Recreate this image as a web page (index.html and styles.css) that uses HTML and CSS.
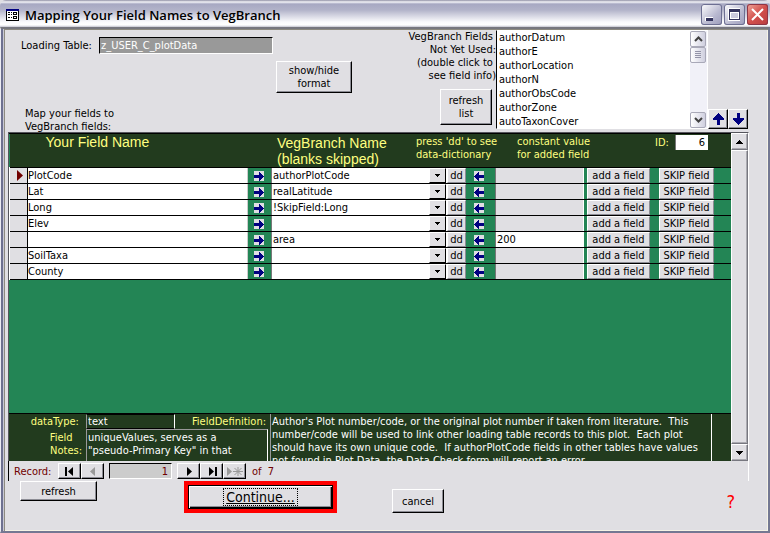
FILE: index.html
```html
<!DOCTYPE html>
<html lang="en">
<head>
<meta charset="utf-8">
<title>Mapping Your Field Names to VegBranch</title>
<link rel="stylesheet" href="styles.css">
</head>
<body>
<svg class="defs" width="0" height="0" aria-hidden="true">
  <symbol id="i-right" viewBox="0 0 10 10"><rect width="10" height="10" fill="#e0dfe3"/><path d="M0 4h5V1h1v1h1v1h1v1h1v1h1v1h-1v1h-1v1h-1v1h-1v1H5V7H0z" fill="#000080"/></symbol>
  <symbol id="i-left" viewBox="0 0 10 10"><rect width="10" height="10" fill="#e0dfe3"/><path d="M10 4H5V1H4v1H3v1H2v1H1v1H0v1h1v1h1v1h1v1h1v1h1V7h5z" fill="#000080"/></symbol>
  <symbol id="i-up" viewBox="0 0 11 12"><path d="M5 0h1v1h1v1h1v1h1v1h1v1h1v2H7v5H4V7H0V5h1V4h1V3h1V2h1V1h1z" fill="#000080"/></symbol>
  <symbol id="i-down" viewBox="0 0 11 12"><path d="M5 12h1v-1h1v-1h1V9h1V8h1V7h1V5H7V0H4v5H0v2h1v1h1v1h1v1h1v1h1z" fill="#000080"/></symbol>
  <symbol id="i-drop" viewBox="0 0 5 3"><path d="M0 0h5v1H4v1H3v1H2V2H1V1H0z"/></symbol>
</svg>
<div class="window">
  <header class="titlebar">
    <svg class="app-icon" width="13" height="12" viewBox="0 0 13 12" shape-rendering="crispEdges"><path d="M0 0h13v12H0z" fill="#000"/><path d="M0 0h13v2H0z" fill="#000080"/><path d="M1 2h11v9H1z" fill="#fff"/><path d="M2 3h2v1H2zM2 5h2v1H2zM2 8h2v1H2zM5 3h1v1H5zM5 5h1v1H5zM5 8h1v1H5zM7 3h4v3H7zM7 7h4v3H7z" fill="#000"/><path d="M8 4h2v1H8zM8 8h2v1H8z" fill="#fff"/></svg>
    <h1>Mapping Your Field Names to VegBranch</h1>
    <div class="caption-buttons">
      <button type="button" class="cap" aria-label="Minimize"><svg width="21" height="21" viewBox="0 0 21 21" shape-rendering="crispEdges"><path d="M4 13h8v4H4z" fill="#fff"/><path d="M5 14h7v3H5z" fill="#33335c"/></svg></button>
      <button type="button" class="cap" aria-label="Maximize"><svg width="21" height="21" viewBox="0 0 21 21" shape-rendering="crispEdges"><path d="M4 4h12v13H4z" fill="#fff"/><path d="M5 5h11v11H5z" fill="#33335c"/><path d="M6 8h9v7H6z" fill="#fff"/><path d="M7 9h7v5H7z" fill="#c9c9dc"/></svg></button>
      <button type="button" class="cap cap-close" aria-label="Close"><svg width="21" height="21" viewBox="0 0 21 21"><path d="M5 5l11 11M16 5L5 16" stroke="#fff" stroke-width="2" fill="none"/></svg></button>
    </div>
  </header>

  <main class="client">
    <section class="top">
      <div class="top-left">
        <div class="loading"><label for="lt">Loading Table:</label><input id="lt" class="lt" value="z_USER_C_plotData" readonly></div>
        <p class="map-note">Map your fields to<br>VegBranch fields:</p>
      </div>
      <button type="button" class="btn showhide">show/hide<br>format</button>
      <div class="unused">
        <label for="fields">VegBranch Fields&nbsp;<br>Not Yet Used:<br>(double click to&nbsp;<br>see field info)</label>
        <button type="button" class="btn reflist">refresh<br>list</button>
      </div>
      <div class="listbox">
        <select id="fields" size="7"><option>authorDatum</option><option>authorE</option><option>authorLocation</option><option>authorN</option><option>authorObsCode</option><option>authorZone</option><option>autoTaxonCover</option></select>
        <div class="xpscroll">
          <button type="button" aria-label="Scroll up"><svg width="9" height="6" viewBox="0 0 9 6"><path d="M1 5l3.500-3.500L8 5" fill="none" stroke="#404040" stroke-width="2"/></svg></button>
          <span class="xpthumb"><svg width="7" height="8" viewBox="0 0 7 8" shape-rendering="crispEdges"><path d="M0 0h6v1H0zM0 2h6v1H0zM0 4h6v1H0zM0 6h6v1H0z" fill="#9494a8"/></svg></span>
          <button type="button" class="at-end" aria-label="Scroll down"><svg width="9" height="6" viewBox="0 0 9 6"><path d="M1 1l3.500 3.500L8 1" fill="none" stroke="#404040" stroke-width="2"/></svg></button>
        </div>
      </div>
      <div class="movers">
        <button type="button" class="btn" aria-label="Move up"><svg width="11" height="12" shape-rendering="crispEdges"><use href="#i-up"/></svg></button>
        <button type="button" class="btn" aria-label="Move down"><svg width="11" height="12" shape-rendering="crispEdges"><use href="#i-down"/></svg></button>
      </div>
    </section>

    <section class="panel">
      <div class="panel-main">
        <div class="records">
          <table>
            <colgroup><col class="c-sel"><col><col class="c-arr"><col class="c-name"><col class="c-drop"><col class="c-dd"><col class="c-back"><col class="c-const"><col class="c-add"><col class="c-skip"><col class="c-end"></colgroup>
            <thead><tr>
              <th colspan="3" class="h-field">Your Field Name</th>
              <th class="h-name">VegBranch Name<br>(blanks skipped)</th>
              <th colspan="3" class="h-small">press 'dd' to see<br>data-dictionary</th>
              <th colspan="2" class="h-small h-const">constant value<br>for added field</th>
              <th colspan="2" class="h-small"><div class="idbox"><label for="id">ID:</label><input id="id" value="6"></div></th>
            </tr></thead>
            <tbody>
            <tr><td class="sel"><svg width="6" height="11" viewBox="0 0 6 11"><path d="M0 0l6 5.500L0 11z" fill="#700000"/></svg></td><td><input class="txt" aria-label="Field" value="PlotCode"></td><td class="ic"><svg width="10" height="10" shape-rendering="crispEdges"><use href="#i-right"/></svg></td><td colspan="2"><div class="combo"><select aria-label="VegBranch name"><option>authorPlotCode</option></select><span><svg width="5" height="3"><use href="#i-drop"/></svg></span></div></td><td><button type="button" class="cellbtn">dd</button></td><td class="ic back"><svg width="10" height="10" shape-rendering="crispEdges"><use href="#i-left"/></svg></td><td><input class="con" aria-label="Constant"></td><td class="add"><button type="button" class="cellbtn">add a field</button></td><td class="skip"><button type="button" class="cellbtn">SKIP field</button></td><td></td></tr>
            <tr><td class="sel"></td><td><input class="txt" aria-label="Field" value="Lat"></td><td class="ic"><svg width="10" height="10" shape-rendering="crispEdges"><use href="#i-right"/></svg></td><td colspan="2"><div class="combo"><select aria-label="VegBranch name"><option>realLatitude</option></select><span><svg width="5" height="3"><use href="#i-drop"/></svg></span></div></td><td><button type="button" class="cellbtn">dd</button></td><td class="ic back"><svg width="10" height="10" shape-rendering="crispEdges"><use href="#i-left"/></svg></td><td><input class="con" aria-label="Constant"></td><td class="add"><button type="button" class="cellbtn">add a field</button></td><td class="skip"><button type="button" class="cellbtn">SKIP field</button></td><td></td></tr>
            <tr><td class="sel"></td><td><input class="txt" aria-label="Field" value="Long"></td><td class="ic"><svg width="10" height="10" shape-rendering="crispEdges"><use href="#i-right"/></svg></td><td colspan="2"><div class="combo"><select aria-label="VegBranch name"><option>!SkipField:Long</option></select><span><svg width="5" height="3"><use href="#i-drop"/></svg></span></div></td><td><button type="button" class="cellbtn">dd</button></td><td class="ic back"><svg width="10" height="10" shape-rendering="crispEdges"><use href="#i-left"/></svg></td><td><input class="con" aria-label="Constant"></td><td class="add"><button type="button" class="cellbtn">add a field</button></td><td class="skip"><button type="button" class="cellbtn">SKIP field</button></td><td></td></tr>
            <tr><td class="sel"></td><td><input class="txt" aria-label="Field" value="Elev"></td><td class="ic"><svg width="10" height="10" shape-rendering="crispEdges"><use href="#i-right"/></svg></td><td colspan="2"><div class="combo"><select aria-label="VegBranch name"><option></option></select><span><svg width="5" height="3"><use href="#i-drop"/></svg></span></div></td><td><button type="button" class="cellbtn">dd</button></td><td class="ic back"><svg width="10" height="10" shape-rendering="crispEdges"><use href="#i-left"/></svg></td><td><input class="con" aria-label="Constant"></td><td class="add"><button type="button" class="cellbtn">add a field</button></td><td class="skip"><button type="button" class="cellbtn">SKIP field</button></td><td></td></tr>
            <tr><td class="sel"></td><td><input class="txt" aria-label="Field" value=""></td><td class="ic"><svg width="10" height="10" shape-rendering="crispEdges"><use href="#i-right"/></svg></td><td colspan="2"><div class="combo"><select aria-label="VegBranch name"><option>area</option></select><span><svg width="5" height="3"><use href="#i-drop"/></svg></span></div></td><td><button type="button" class="cellbtn">dd</button></td><td class="ic back"><svg width="10" height="10" shape-rendering="crispEdges"><use href="#i-left"/></svg></td><td><input class="con filled" aria-label="Constant" value="200"></td><td class="add"><button type="button" class="cellbtn">add a field</button></td><td class="skip"><button type="button" class="cellbtn">SKIP field</button></td><td></td></tr>
            <tr><td class="sel"></td><td><input class="txt" aria-label="Field" value="SoilTaxa"></td><td class="ic"><svg width="10" height="10" shape-rendering="crispEdges"><use href="#i-right"/></svg></td><td colspan="2"><div class="combo"><select aria-label="VegBranch name"><option></option></select><span><svg width="5" height="3"><use href="#i-drop"/></svg></span></div></td><td><button type="button" class="cellbtn">dd</button></td><td class="ic back"><svg width="10" height="10" shape-rendering="crispEdges"><use href="#i-left"/></svg></td><td><input class="con" aria-label="Constant"></td><td class="add"><button type="button" class="cellbtn">add a field</button></td><td class="skip"><button type="button" class="cellbtn">SKIP field</button></td><td></td></tr>
            <tr><td class="sel"></td><td><input class="txt" aria-label="Field" value="County"></td><td class="ic"><svg width="10" height="10" shape-rendering="crispEdges"><use href="#i-right"/></svg></td><td colspan="2"><div class="combo"><select aria-label="VegBranch name"><option></option></select><span><svg width="5" height="3"><use href="#i-drop"/></svg></span></div></td><td><button type="button" class="cellbtn">dd</button></td><td class="ic back"><svg width="10" height="10" shape-rendering="crispEdges"><use href="#i-left"/></svg></td><td><input class="con" aria-label="Constant"></td><td class="add"><button type="button" class="cellbtn">add a field</button></td><td class="skip"><button type="button" class="cellbtn">SKIP field</button></td><td></td></tr>
            </tbody>
          </table>
        </div>
        <div class="detail">
          <div class="detail-left">
            <label for="dt">dataType:&nbsp;</label>
            <input id="dt" class="dbox" value="text" readonly>
            <label for="fd">FieldDefinition:</label>
            <label for="fn">Field&nbsp; &nbsp;<br>Notes:</label>
            <textarea id="fn" class="dbox notes" readonly>uniqueValues, serves as a
"pseudo-Primary Key" in that</textarea>
          </div>
          <textarea id="fd" class="dbox def" readonly>Author's Plot number/code, or the original plot number if taken from literature.  This
number/code will be used to link other loading table records to this plot.  Each plot
should have its own unique code.  If authorPlotCode fields in other tables have values
not found in Plot Data, the Data Check form will report an error.</textarea>
        </div>
      </div>
      <div class="scroll">
        <button type="button" aria-label="Previous rows"><svg width="7" height="4" viewBox="0 0 7 4" shape-rendering="crispEdges"><path d="M3 0h1v1h1v1h1v1h1v1H0V3h1V2h1V1h1z"/></svg></button>
        <span class="thumb"></span>
        <button type="button" aria-label="Next rows"><svg width="7" height="4" viewBox="0 0 7 4" shape-rendering="crispEdges"><path d="M3 4h1V3h1V2h1V1h1V0H0v1h1v1h1v1h1z"/></svg></button>
      </div>
    </section>

    <nav class="recnav">
      <label for="rec">Record:</label>
      <button type="button" aria-label="First"><svg width="10" height="9" viewBox="0 0 10 9"><path d="M0 0h2v9H0zM8 0v9L3 4.500z"/></svg></button>
      <button type="button" aria-label="Previous"><svg width="10" height="9" viewBox="0 0 10 9"><path d="M7 0v9L2 4.500z" fill="#999"/></svg></button>
      <input id="rec" value="1">
      <button type="button" aria-label="Next"><svg width="10" height="9" viewBox="0 0 10 9"><path d="M3 0v9l5-4.500z"/></svg></button>
      <button type="button" aria-label="Last"><svg width="10" height="9" viewBox="0 0 10 9"><path d="M8 0h2v9H8zM2 0v9l5-4.500z"/></svg></button>
      <button type="button" aria-label="New"><svg width="17" height="9" viewBox="0 0 17 9"><path d="M1 0v9l5-4.500z" fill="#999"/><path d="M12 0v9M7 4.500h10M8.500 1l7 7M15.500 1l-7 7" stroke="#999" fill="none"/></svg></button>
      <span class="of">of&nbsp; 7</span>
    </nav>

    <footer class="actions">
      <button type="button" class="btn refresh">refresh</button>
      <div class="primary"><button type="button"><span>Continue...</span></button></div>
      <button type="button" class="btn cancel">cancel</button>
      <button type="button" class="help">?</button>
    </footer>
  </main>
</div>
</body>
</html>
```
FILE: styles.css
```css
* { box-sizing: border-box; }
body { margin: 0; font: 11px/13px "DejaVu Sans Condensed", "Noto Sans", sans-serif; color: #000; }
button, input, select, textarea { font: inherit; color: inherit; margin: 0; padding: 0; border: 0; border-radius: 0; min-width: 0; }
input, select, textarea { appearance: none; outline: 0; display: block; }
button { display: flex; align-items: center; justify-content: center; background: #e0dfe3; white-space: nowrap; }
svg { display: block; flex: none; }
p, h1 { margin: 0; }
.defs { position: absolute; }

.window { display: flex; flex-direction: column; min-height: 100vh; background: #e0dfe3; }
.titlebar { display: flex; align-items: center; height: 27px; padding: 2px 2px 0 6px; border-radius: 6px 6px 0 0; background: linear-gradient(#8f8fa4 0, #f4f4f8 2px, #a7a8c2 4px, #b2b3c9 10px, #fbfbfd 22px, #fff 25px, #c4c4d0 27px); }
.titlebar h1 { flex: 1; margin-left: 6px; font: 600 13px/20px "Open Sans", sans-serif; }
.caption-buttons { display: flex; gap: 2px; }
.cap { width: 21px; height: 21px; border-radius: 3px; background: linear-gradient(135deg, #fff, #b9b9d0 60%, #9c9cbb); box-shadow: inset 0 0 0 1px #6d6f92; }
.cap-close { background: linear-gradient(135deg, #f0a79c, #d2504c 50%, #b93c40); box-shadow: inset 0 0 0 1px #8e3545; }

.client { flex: 1; display: flex; flex-direction: column; border: solid #747892; border-width: 2px 2px 2px 1px; border-top-color: #77777f; border-left-color: #ececf2; padding: 1px 1px 0 4px; box-shadow: inset 2px 0 #6d7090, inset 3px 0 #c8c8d4, inset 4px 1px #8d8a80, inset -1px -1px #f5f3e6; }
.top { display: flex; align-items: flex-start; height: 102px; }
.top-left { flex: 1; padding: 7px 0 0 16px; }
.loading { display: flex; align-items: center; }
.loading label { width: 78px; white-space: nowrap; }
.lt { flex: 0 0 174px; height: 17px; padding-left: 1px; background: #999; color: #fff; border: 1px solid; border-color: #000 #fff #fff #000; }
.map-note { margin: 53px 0 0 4px; }
.btn { line-height: 13px; border: 1px solid; border-color: #fff #000 #000 #fff; box-shadow: inset -1px -1px #8c8c94; }
.showhide { width: 76px; height: 32px; margin: 31px 49px 0 0; }
.unused { width: 95px; text-align: right; }
.unused label { display: block; margin-bottom: 7px; white-space: nowrap; }
.reflist { width: 52px; height: 36px; margin: 0 4px 0 auto; }
.listbox { display: flex; width: 212px; height: 99px; border: 1px solid #fff; border-left-color: #000; background: #fff; }
.listbox select { flex: 1; height: 97px; padding: 0; overflow: hidden; background: #fff; }
.listbox option { padding: 0 0 0 2px; font-size: 11px; line-height: 14px; min-height: 14px; height: 14px; }
.xpscroll { display: flex; flex-direction: column; width: 17px; background: #f1f1f8; }
.xpscroll button, .xpthumb { display: flex; align-items: center; justify-content: center; width: 16px; height: 16px; border: 1px solid #a9a9b8; border-radius: 2px; background: linear-gradient(90deg, #fff, #cfcfdf); }
.xpscroll .at-end { margin-top: auto; }
.movers { display: flex; align-self: flex-start; margin: 79px 19px 0 0; }
.movers .btn { width: 20px; height: 20px; }

.panel { flex: 1; display: flex; margin: 0 18px 0 3px; border: solid #55555c; border-width: 1px 1px 0 1px; border-right-color: #fff; }
.panel-main { flex: 1; min-width: 0; display: flex; flex-direction: column; background: #238555; border: solid #000; border-width: 1px 0 0 0; }
.records { flex: 1; }
table { width: 100%; table-layout: fixed; border-collapse: collapse; }
.c-sel { width: 18px; } .c-arr { width: 23px; } .c-name { width: 141px; } .c-drop { width: 35px; } .c-dd { width: 19px; } .c-back { width: 29px; } .c-const { width: 89px; } .c-add { width: 67px; } .c-skip { width: 64px; } .c-end { width: 16px; }
thead { background: #223b1e; color: #ffff80; }
th { height: 32px; padding: 0; text-align: left; vertical-align: top; font-weight: 400; white-space: nowrap; }
.h-field, .h-name { font: 14px/16px "Liberation Sans", sans-serif; }
.h-field { padding-left: 36px; }
.h-name { padding: 1px 0 0 6px; line-height: 16px; }
.h-small { padding: 1px 0 0 4px; }
.h-const { padding-left: 22px; }
.idbox { display: flex; align-items: center; }
.idbox label { width: 20px; }
.idbox input { width: 33px; height: 15px; padding-right: 3px; text-align: right; background: #fff; color: #000; border-left: 1px solid #777; }
td { height: 16px; padding: 0; border-top: 1px solid #000; }
tbody { border-bottom: 1px solid #000; }
.sel { background: #e0dfe3; border-right: 1px solid #000; border-left: 1px solid #fff; }
.sel svg { margin-left: 7px; }
.txt { width: 100%; height: 15px; padding-left: 0; background: #fff; border-right: 1px solid #ccc; }
.ic svg { margin-left: 6px; }
.back svg { margin-left: 8px; }
.combo { position: relative; display: flex; height: 15px; background: #fff; border-left: 1px solid #777; }
.combo select { flex: 1; padding-left: 1px; background: #fff; }
.combo span { position: absolute; right: 1px; top: 0; display: flex; align-items: center; justify-content: center; width: 17px; height: 15px; background: #e0dfe3; border: 1px solid; border-color: #fff #000 #000 #fff; pointer-events: none; }
.cellbtn { width: 100%; height: 15px; font-size: 11px; line-height: 13px; border: 1px solid; border-color: #fff #8c8c94 #8c8c94 #fff; }
.con { width: 100%; height: 15px; padding-left: 1px; background: #e0dfe3; border: solid #777; border-width: 0 1px 0 1px; border-right-color: #fff; }
.filled { background: #fff; }
.add { padding: 0 1px 0 3px; }
.skip { padding: 0 1px 0 8px; }

.detail { display: flex; height: 48px; background: #223b1e; border-top: 1px solid #000; color: #ffff80; }
.detail-left { display: grid; grid-template-columns: 77px 89px 95px; grid-template-rows: 15px 32px; flex: none; text-align: right; line-height: 13px; }
.detail-left label { padding: 1px 4px 0 0; white-space: nowrap; }
.detail-left label:nth-of-type(3) { padding-top: 2px; }
.dbox { width: 100%; height: 100%; padding: 0 1px; background: #223b1e; color: #fff; border: 1px solid; border-color: #000 #fff #000 #999; resize: none; overflow: hidden; white-space: pre; }
.notes { grid-column: 2 / 4; width: 182px; padding-top: 1px; border-top-color: #999; border-bottom: 0; }
.def { flex: 1; margin-right: 19px; border-top: 0; border-bottom: 0; padding-top: 1px; }

.scroll { display: flex; flex-direction: column; width: 17px; background: #efeef2; }
.scroll button, .thumb { width: 17px; height: 17px; background: #e0dfe3; border: 1px solid; border-color: #fff #77777f #77777f #fff; box-shadow: inset -1px -1px #aaaab0; }
.scroll .thumb { flex: 1; }

.recnav { display: flex; align-items: center; height: 20px; margin: 0 18px 0 3px; padding-left: 5px; color: #700000; border: solid #000; border-width: 0 1px; border-right-color: #fff; }
.recnav label { width: 44px; }
.recnav button { width: 23px; height: 16px; border: 1px solid; border-color: #fff #000 #000 #fff; box-shadow: inset -1px -1px #8c8c94; }
.recnav input { width: 63px; height: 16px; margin: 0 5px; padding-right: 3px; text-align: right; background: #ccc; border: 1px solid; border-color: #000 #fff #fff #000; }
.of { margin-left: 6px; }

.actions { display: flex; align-items: flex-start; height: 50px; padding: 0 32px 0 15px; }
.refresh { width: 77px; height: 20px; }
.primary { margin-left: 87px; border: 4px solid #f00; }
.primary button { width: 145px; height: 24px; border: 1px solid #000; box-shadow: inset 1px 1px #fff, inset -1px -1px #000, inset -2px -2px #8c8c94; font-size: 14px; line-height: 16px; text-decoration: underline; }
.primary span { border: 1px dotted #000; padding: 0 2px; }
.cancel { width: 52px; height: 24px; margin: 8px auto 0 55px; }
.help { margin-top: 10px; background: none; color: #f00; font-size: 18px; line-height: 22px; }
```
